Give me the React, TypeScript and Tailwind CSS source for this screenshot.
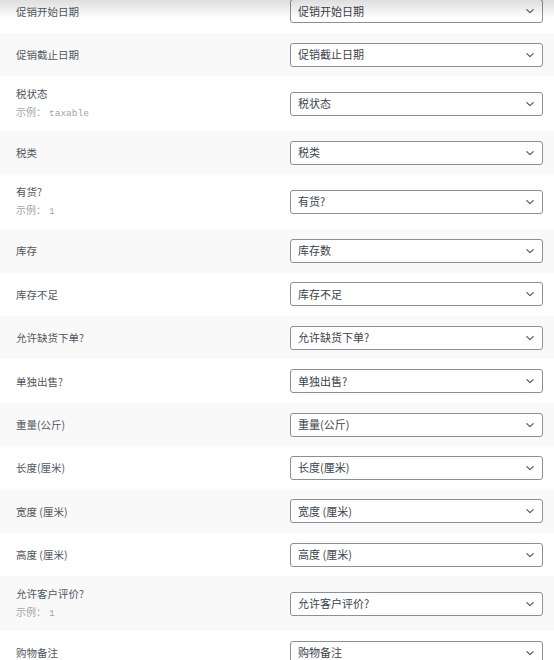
import React from "react";

type Row = { label: string; value: string; example?: string };

const rows: Row[] = [
  { label: "促销开始日期", value: "促销开始日期" },
  { label: "促销截止日期", value: "促销截止日期" },
  { label: "税状态", value: "税状态", example: "taxable" },
  { label: "税类", value: "税类" },
  { label: "有货?", value: "有货?", example: "1" },
  { label: "库存", value: "库存数" },
  { label: "库存不足", value: "库存不足" },
  { label: "允许缺货下单?", value: "允许缺货下单?" },
  { label: "单独出售?", value: "单独出售?" },
  { label: "重量(公斤)", value: "重量(公斤)" },
  { label: "长度(厘米)", value: "长度(厘米)" },
  { label: "宽度 (厘米)", value: "宽度 (厘米)" },
  { label: "高度 (厘米)", value: "高度 (厘米)" },
  { label: "允许客户评价?", value: "允许客户评价?", example: "1" },
  { label: "购物备注", value: "购物备注" },
];

function Chevron() {
  return (
    <svg width="10" height="10" viewBox="0 0 10 10" className="shrink-0">
      <path d="M1.8 3.6 L5 6.6 L8.2 3.6" fill="none" stroke="#50575e" strokeWidth="1.2" strokeLinecap="round" strokeLinejoin="round" />
    </svg>
  );
}

export default function App() {
  return (
    <div
      className="relative h-[660px] w-[554px] overflow-hidden bg-white"
      style={{ fontFamily: '"Noto Sans CJK SC", "Noto Sans", sans-serif' }}
    >
      <div className="-mt-[10.5px] flex flex-col">
        {rows.map((r, i) => (
          <div
            key={i}
            className={`flex items-center ${r.example ? "h-[54.8px]" : "h-[43.4px]"} ${i % 2 === 1 ? "bg-[#f9f9f9]" : "bg-white"}`}
          >
            <div className="flex w-[290px] flex-col justify-center gap-[3px] pl-4">
              <span className="text-[10.5px] leading-[15px] text-[#50575e]">{r.label}</span>
              {r.example && (
                <span className="text-[10px] leading-[15px] text-[#a0a5aa]">
                  示例：
                  <span className="ml-[3px] text-[9.5px]" style={{ fontFamily: '"Liberation Mono", monospace' }}>
                    {r.example}
                  </span>
                </span>
              )}
            </div>
            <div className="flex h-[24px] w-[253px] items-center justify-between rounded-[3px] border border-[#8c8f94] bg-white pl-[7px] pr-[7px]">
              <span className="text-[11px] leading-none text-[#3c434a]">{r.value}</span>
              <Chevron />
            </div>
          </div>
        ))}
      </div>
      <div className="pointer-events-none absolute left-0 right-0 top-0 h-[18px] bg-gradient-to-b from-[rgba(0,0,0,0.13)] to-transparent" />
    </div>
  );
}
